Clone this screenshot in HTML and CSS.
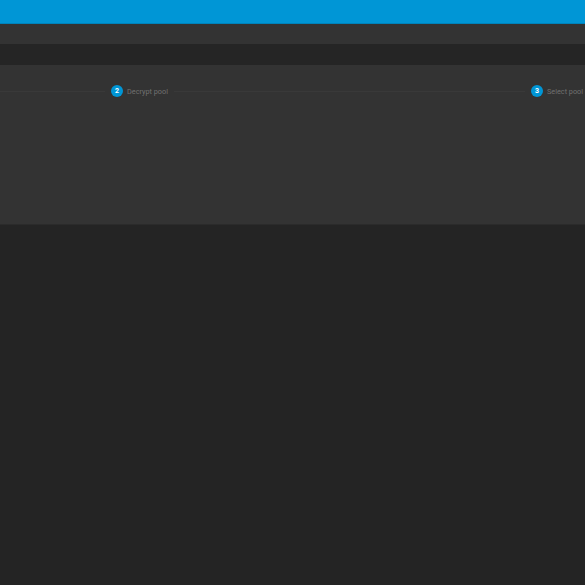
FILE: index.html
```html
<!DOCTYPE html>
<html>
<head>
<meta charset="utf-8">
<link rel="stylesheet" href="styles.css">
</head>
<body>
<div class="topbar"></div>
<div class="toolbar"></div>
<div class="band"></div>
<div class="card">
  <div class="stepper">
    <div class="line first"></div>
    <div class="step"><span class="num">2</span><span class="label">Decrypt pool</span></div>
    <div class="line mid"></div>
    <div class="step"><span class="num">3</span><span class="label">Select pool</span></div>
  </div>
</div>
</body>
</html>
```
FILE: styles.css
```css
html, body {
  margin: 0;
  padding: 0;
  background: #242424;
  font-family: Roboto, "Liberation Sans", sans-serif;
  overflow: hidden;
}
.topbar {
  height: 23px;
  background: #0096d6;
  border-bottom: 1px solid #0083bb;
}
.toolbar {
  height: 20px;
  background: #333333;
}
.band {
  height: 21px;
  background: #252525;
}
.card {
  height: 159px;
  background: #333333;
  border-bottom: 1px solid #2b2b2b;
  overflow: hidden;
}
.stepper {
  display: flex;
  align-items: center;
  padding-top: 20px;
  height: 12px;
  white-space: nowrap;
}
.line {
  height: 1px;
  background: #393939;
  flex: none;
}
.line.first { width: 105px; margin-right: 6px; }
.line.mid { width: 351px; margin: 0 6px; }
.step {
  display: flex;
  align-items: center;
  flex: none;
}
.num {
  width: 12px;
  height: 12px;
  border-radius: 50%;
  background: #0096d6;
  color: #ffffff;
  font-size: 7px;
  font-weight: 700;
  display: flex;
  align-items: center;
  justify-content: center;
}
.label {
  margin-left: 4px;
  font-size: 7.3px;
  color: #717171;
}
```
